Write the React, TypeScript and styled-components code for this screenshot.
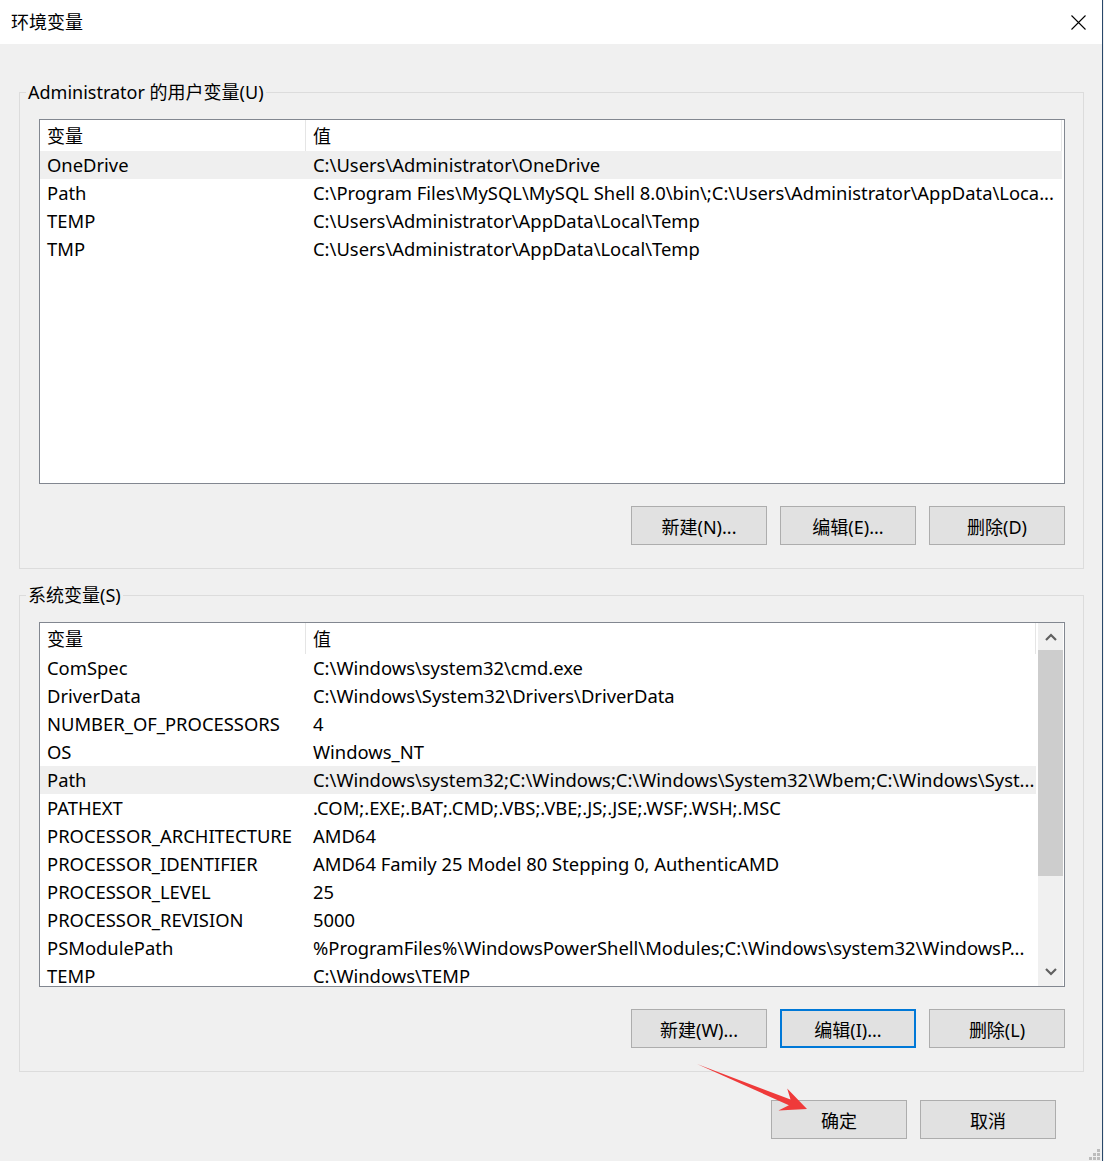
import React from 'react';
import styled, { createGlobalStyle } from 'styled-components';

const GlobalStyle = createGlobalStyle`
  html, body {
    margin: 0;
    padding: 0;
    background: #f0f0f0;
  }
  body {
    font-family: "Segoe UI", "Noto Sans", "Noto Sans CJK SC", sans-serif;
    color: #000;
  }
`;

const FONT = `"Segoe UI", "Noto Sans", "Noto Sans CJK SC", sans-serif`;

const Window = styled.div`
  position: relative;
  width: 1103px;
  height: 1161px;
  box-sizing: border-box;
  background: #f0f0f0;
  border-right: 1px solid #27476a;
  display: flex;
  flex-direction: column;
  overflow: hidden;
`;

const TitleBar = styled.div`
  height: 44px;
  flex: none;
  background: #fff;
  display: flex;
  align-items: center;
  justify-content: space-between;
  padding: 0 16px 0 11px;
`;

const Title = styled.span`
  font-family: ${FONT};
  font-size: 18px;
  line-height: 24px;
`;

const CloseIcon = styled.svg`
  width: 15px;
  height: 15px;
  display: block;
`;

const Body = styled.div`
  padding: 36px 18px 0 19px;
  display: flex;
  flex-direction: column;
`;

const Group = styled.fieldset<{ $gap?: number }>`
  margin: ${p => p.$gap ?? 0}px 0 0 0;
  padding: 15px 18px 23px 19px;
  border: 1px solid #dcdcdc;
  min-width: 0;
`;

const Legend = styled.legend`
  font-family: ${FONT};
  font-size: 18px;
  line-height: 24px;
  padding: 0 2px;
  margin-left: -13px;
`;

const ListBox = styled.div`
  height: 365px;
  box-sizing: border-box;
  border: 1px solid #828790;
  background: #fff;
  display: flex;
  overflow: hidden;
`;

const ListMain = styled.div`
  flex: 1;
  min-width: 0;
  display: flex;
  flex-direction: column;
  overflow: hidden;
`;

const HeaderRow = styled.div`
  height: 31px;
  flex: none;
  display: flex;
  padding-right: 2px;
`;

const HeaderCell = styled.div<{ $w?: number }>`
  ${p => (p.$w ? `width: ${p.$w}px; flex: none;` : 'flex: 1;')}
  box-sizing: border-box;
  border-right: 1px solid #e5e5e5;
  padding: 2px 0 0 7px;
  font-family: ${FONT};
  font-size: 18px;
  line-height: 29px;
  white-space: nowrap;
`;

const Row = styled.div<{ $selected?: boolean }>`
  height: 28px;
  flex: none;
  display: flex;
  margin-right: 2px;
  background: ${p => (p.$selected ? '#efefef' : 'transparent')};
`;

const Cell = styled.div<{ $w?: number }>`
  ${p => (p.$w ? `width: ${p.$w}px; flex: none;` : 'flex: 1; min-width: 0;')}
  box-sizing: border-box;
  padding-left: 7px;
  font-family: ${FONT};
  font-size: 18.4px;
  line-height: 28px;
  white-space: nowrap;
  overflow: hidden;
`;

const ScrollBar = styled.div`
  width: 25px;
  flex: none;
  margin-right: 1px;
  background: #f0f0f0;
  display: flex;
  flex-direction: column;
`;

const ScrollArrow = styled.div<{ $h: number }>`
  height: ${p => p.$h}px;
  flex: none;
  display: flex;
  align-items: center;
  justify-content: center;
`;

const ScrollThumb = styled.div`
  height: 226px;
  flex: none;
  background: #cdcdcd;
`;

const ScrollTrack = styled.div`
  flex: 1;
`;

const ButtonRow = styled.div<{ $top: number; $right?: number }>`
  display: flex;
  justify-content: flex-end;
  gap: 13px;
  margin-top: ${p => p.$top}px;
  padding-right: ${p => p.$right ?? 0}px;
`;

const Button = styled.button<{ $focused?: boolean }>`
  width: 136px;
  height: 39px;
  box-sizing: border-box;
  margin: 0;
  padding: 0;
  background: #e1e1e1;
  border: ${p => (p.$focused ? '2px solid #0078d7' : '1px solid #adadad')};
  font-family: ${FONT};
  font-size: 18px;
  color: #000;
  display: flex;
  align-items: center;
  justify-content: center;
`;

const Overlay = styled.svg`
  position: absolute;
  display: block;
`;

type Item = { name: string; value: string; selected?: boolean };

const userVars: Item[] = [
  { name: 'OneDrive', value: 'C:\\Users\\Administrator\\OneDrive', selected: true },
  { name: 'Path', value: 'C:\\Program Files\\MySQL\\MySQL Shell 8.0\\bin\\;C:\\Users\\Administrator\\AppData\\Loca...' },
  { name: 'TEMP', value: 'C:\\Users\\Administrator\\AppData\\Local\\Temp' },
  { name: 'TMP', value: 'C:\\Users\\Administrator\\AppData\\Local\\Temp' },
];

const systemVars: Item[] = [
  { name: 'ComSpec', value: 'C:\\Windows\\system32\\cmd.exe' },
  { name: 'DriverData', value: 'C:\\Windows\\System32\\Drivers\\DriverData' },
  { name: 'NUMBER_OF_PROCESSORS', value: '4' },
  { name: 'OS', value: 'Windows_NT' },
  { name: 'Path', value: 'C:\\Windows\\system32;C:\\Windows;C:\\Windows\\System32\\Wbem;C:\\Windows\\Syst...', selected: true },
  { name: 'PATHEXT', value: '.COM;.EXE;.BAT;.CMD;.VBS;.VBE;.JS;.JSE;.WSF;.WSH;.MSC' },
  { name: 'PROCESSOR_ARCHITECTURE', value: 'AMD64' },
  { name: 'PROCESSOR_IDENTIFIER', value: 'AMD64 Family 25 Model 80 Stepping 0, AuthenticAMD' },
  { name: 'PROCESSOR_LEVEL', value: '25' },
  { name: 'PROCESSOR_REVISION', value: '5000' },
  { name: 'PSModulePath', value: '%ProgramFiles%\\WindowsPowerShell\\Modules;C:\\Windows\\system32\\WindowsP...' },
  { name: 'TEMP', value: 'C:\\Windows\\TEMP' },
];

const Chevron = ({ up }: { up?: boolean }) => (
  <svg width="12" height="8" viewBox="0 0 12 8">
    <polyline
      points={up ? '1,7 6,2 11,7' : '1,1 6,6 11,1'}
      fill="none"
      stroke="#606060"
      strokeWidth="2.2"
    />
  </svg>
);

const VarList = ({ items, scroll }: { items: Item[]; scroll?: boolean }) => (
  <ListBox>
    <ListMain>
      <HeaderRow>
        <HeaderCell $w={266}>变量</HeaderCell>
        <HeaderCell>值</HeaderCell>
      </HeaderRow>
      {items.map(it => (
        <Row key={it.name + it.value} $selected={it.selected}>
          <Cell $w={266}>{it.name}</Cell>
          <Cell>{it.value}</Cell>
        </Row>
      ))}
    </ListMain>
    {scroll && (
      <ScrollBar>
        <ScrollArrow $h={27}>
          <Chevron up />
        </ScrollArrow>
        <ScrollThumb />
        <ScrollTrack />
        <ScrollArrow $h={29}>
          <Chevron />
        </ScrollArrow>
      </ScrollBar>
    )}
  </ListBox>
);

export default function App() {
  return (
    <>
      <GlobalStyle />
      <Window>
        <TitleBar>
          <Title>环境变量</Title>
          <CloseIcon viewBox="0 0 15 15">
            <path d="M0.5 0.5 L14.5 14.5 M14.5 0.5 L0.5 14.5" stroke="#000" strokeWidth="1.1" fill="none" />
          </CloseIcon>
        </TitleBar>
        <Body>
          <Group>
            <Legend>Administrator 的用户变量(U)</Legend>
            <VarList items={userVars} />
            <ButtonRow $top={22}>
              <Button>新建(N)...</Button>
              <Button>编辑(E)...</Button>
              <Button>删除(D)</Button>
            </ButtonRow>
          </Group>
          <Group $gap={14}>
            <Legend>系统变量(S)</Legend>
            <VarList items={systemVars} scroll />
            <ButtonRow $top={22}>
              <Button>新建(W)...</Button>
              <Button $focused>编辑(I)...</Button>
              <Button>删除(L)</Button>
            </ButtonRow>
          </Group>
          <ButtonRow $top={28} $right={28}>
            <Button>确定</Button>
            <Button>取消</Button>
          </ButtonRow>
        </Body>

        {/* annotation arrow pointing at the confirm button */}
        <Overlay width="130" height="65" viewBox="0 0 130 65" style={{ left: 690, top: 1055 }}>
          <polygon
            points="7,9 100.5,44.6 97.2,33.5 117,54 88.4,55.4 98.9,50.2"
            fill="#ef3a3a"
          />
        </Overlay>

        {/* size grip in the bottom-right corner */}
        <Overlay width="12" height="12" viewBox="0 0 12 12" style={{ left: 1089, top: 1149 }}>
          <rect x="8" y="0" width="3" height="3" fill="#bcbcbc" />
          <rect x="4" y="4" width="3" height="3" fill="#bcbcbc" />
          <rect x="8" y="4" width="3" height="3" fill="#bcbcbc" />
          <rect x="0" y="8" width="3" height="3" fill="#bcbcbc" />
          <rect x="4" y="8" width="3" height="3" fill="#bcbcbc" />
          <rect x="8" y="8" width="3" height="3" fill="#bcbcbc" />
        </Overlay>
      </Window>
    </>
  );
}
